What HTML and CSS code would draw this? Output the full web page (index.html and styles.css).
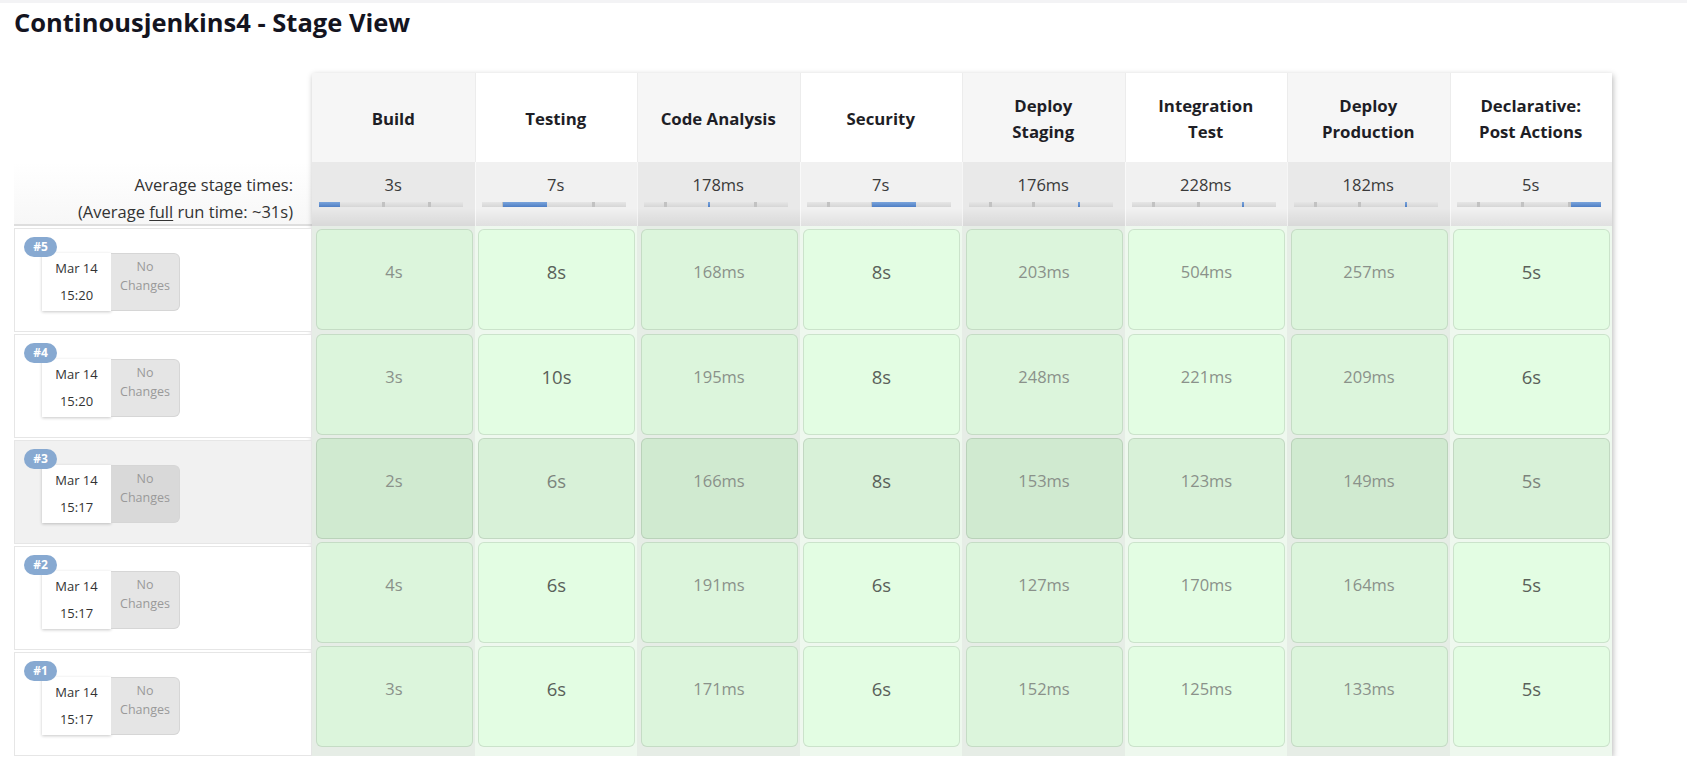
FILE: index.html
```html
<!DOCTYPE html>
<html>
<head>
<meta charset="utf-8">
<title>Continousjenkins4 - Stage View</title>
<link rel="stylesheet" href="styles.css">
</head>
<body>
<div class="topbar"></div>
<h1 class="title">Continousjenkins4 - Stage View</h1>
<div class="stage-view">
  <div class="builds">
    <div class="builds-head"></div>
    <div class="avg-label">
      <div>Average stage times:</div>
      <div>(Average <u>full</u> run time: ~31s)</div>
    </div>
    <div class="build-row"><div class="build-box"><span class="badge">#5</span><div class="build-info"><div class="date">Mar 14<br>15:20</div><div class="changes">No<br>Changes</div></div></div></div>
    <div class="build-row"><div class="build-box"><span class="badge">#4</span><div class="build-info"><div class="date">Mar 14<br>15:20</div><div class="changes">No<br>Changes</div></div></div></div>
    <div class="build-row hover"><div class="build-box"><span class="badge">#3</span><div class="build-info"><div class="date">Mar 14<br>15:17</div><div class="changes">No<br>Changes</div></div></div></div>
    <div class="build-row"><div class="build-box"><span class="badge">#2</span><div class="build-info"><div class="date">Mar 14<br>15:17</div><div class="changes">No<br>Changes</div></div></div></div>
    <div class="build-row"><div class="build-box"><span class="badge">#1</span><div class="build-info"><div class="date">Mar 14<br>15:17</div><div class="changes">No<br>Changes</div></div></div></div>
  </div>

  <div class="stages">
    <div class="col odd">
      <div class="stage-head">Build</div>
      <div class="stage-avg"><div class="avg-time">3s</div><div class="bar"><i class="tick" style="left:63px"></i><i class="tick" style="left:109px"></i><i class="fill" style="left:0;width:21px"></i></div></div>
      <div class="col-body">
        <div class="cell">4s</div>
        <div class="cell">3s</div>
        <div class="cell hover">2s</div>
        <div class="cell">4s</div>
        <div class="cell">3s</div>
      </div>
    </div>
    <div class="col even">
      <div class="stage-head">Testing</div>
      <div class="stage-avg"><div class="avg-time">7s</div><div class="bar"><i class="tick" style="left:20px"></i><i class="tick" style="left:110px"></i><i class="fill" style="left:21px;width:44px"></i></div></div>
      <div class="col-body">
        <div class="cell long">8s</div>
        <div class="cell long">10s</div>
        <div class="cell hover long dim">6s</div>
        <div class="cell long">6s</div>
        <div class="cell long">6s</div>
      </div>
    </div>
    <div class="col odd">
      <div class="stage-head">Code Analysis</div>
      <div class="stage-avg"><div class="avg-time">178ms</div><div class="bar"><i class="tick" style="left:20px"></i><i class="tick" style="left:110px"></i><i class="fill" style="left:64px;width:2px"></i></div></div>
      <div class="col-body">
        <div class="cell">168ms</div>
        <div class="cell">195ms</div>
        <div class="cell hover">166ms</div>
        <div class="cell">191ms</div>
        <div class="cell">171ms</div>
      </div>
    </div>
    <div class="col even">
      <div class="stage-head">Security</div>
      <div class="stage-avg"><div class="avg-time">7s</div><div class="bar"><i class="tick" style="left:20px"></i><i class="tick" style="left:64px"></i><i class="fill" style="left:65px;width:44px"></i></div></div>
      <div class="col-body">
        <div class="cell long">8s</div>
        <div class="cell long">8s</div>
        <div class="cell hover long">8s</div>
        <div class="cell long">6s</div>
        <div class="cell long">6s</div>
      </div>
    </div>
    <div class="col odd">
      <div class="stage-head">Deploy<br>Staging</div>
      <div class="stage-avg"><div class="avg-time">176ms</div><div class="bar"><i class="tick" style="left:20px"></i><i class="tick" style="left:63px"></i><i class="fill" style="left:109px;width:2px"></i></div></div>
      <div class="col-body">
        <div class="cell">203ms</div>
        <div class="cell">248ms</div>
        <div class="cell hover">153ms</div>
        <div class="cell">127ms</div>
        <div class="cell">152ms</div>
      </div>
    </div>
    <div class="col even">
      <div class="stage-head">Integration<br>Test</div>
      <div class="stage-avg"><div class="avg-time">228ms</div><div class="bar"><i class="tick" style="left:20px"></i><i class="tick" style="left:65px"></i><i class="fill" style="left:110px;width:2px"></i></div></div>
      <div class="col-body">
        <div class="cell">504ms</div>
        <div class="cell">221ms</div>
        <div class="cell hover">123ms</div>
        <div class="cell">170ms</div>
        <div class="cell">125ms</div>
      </div>
    </div>
    <div class="col odd">
      <div class="stage-head">Deploy<br>Production</div>
      <div class="stage-avg"><div class="avg-time">182ms</div><div class="bar"><i class="tick" style="left:20px"></i><i class="tick" style="left:64px"></i><i class="fill" style="left:111px;width:2px"></i></div></div>
      <div class="col-body">
        <div class="cell">257ms</div>
        <div class="cell">209ms</div>
        <div class="cell hover">149ms</div>
        <div class="cell">164ms</div>
        <div class="cell">133ms</div>
      </div>
    </div>
    <div class="col even">
      <div class="stage-head">Declarative:<br>Post Actions</div>
      <div class="stage-avg"><div class="avg-time">5s</div><div class="bar"><i class="tick" style="left:20px"></i><i class="tick" style="left:64px"></i><i class="tick" style="left:111px"></i><i class="fill" style="left:114px;width:30px"></i></div></div>
      <div class="col-body">
        <div class="cell long">5s</div>
        <div class="cell long">6s</div>
        <div class="cell hover long dim">5s</div>
        <div class="cell long">5s</div>
        <div class="cell long">5s</div>
      </div>
    </div>
  </div>
</div>
</body>
</html>
```

FILE: styles.css
```css
* { box-sizing: border-box; }

body {
  margin: 0;
  font-family: "Open Sans", "Noto Sans", sans-serif;
  color: #333;
  background: #fff;
}

.topbar {
  height: 3px;
  background: #f3f3f5;
}

.title {
  margin: 3px 0 0 14px;
  font-size: 25.5px;
  line-height: 32px;
  font-weight: 700;
  color: #14141f;
}

.stage-view {
  display: flex;
  padding-left: 14px;
  margin-top: 35px;
}

/* ---------- left builds column ---------- */
.builds {
  width: 298px;
  flex: none;
  display: flex;
  flex-direction: column;
}

.builds-head { height: 89px; }

.avg-label {
  height: 64px;
  padding: 10px 19px 0 0;
  text-align: right;
  font-size: 16.5px;
  line-height: 26.7px;
  color: #333;
  border-bottom: 2px solid #dedede;
  background: linear-gradient(#ffffff, #f7f7f7);
}

.avg-label u { text-underline-offset: 2px; }

.build-row {
  height: 106px;
  padding: 1.5px 0 0.5px;
}

.build-box {
  position: relative;
  height: 104px;
  border: 1px solid #e6e6e6;
  padding: 24px 0 0 27px;
  background: #fff;
}

.build-row.hover .build-box { background: #f1f1f1; }

.badge {
  position: absolute;
  left: 9px;
  top: 8px;
  width: 33px;
  height: 20px;
  border-radius: 10px;
  background: #87a9d1;
  color: #fff;
  font-size: 12px;
  font-weight: 700;
  line-height: 20px;
  text-align: center;
  z-index: 1;
}

.build-info { display: flex; }

.date {
  width: 69px;
  height: 58px;
  padding-top: 2px;
  background: #fff;
  box-shadow: 0 1px 3px rgba(0, 0, 0, 0.22);
  font-size: 13px;
  line-height: 27.7px;
  text-align: center;
  color: #333;
}

.changes {
  width: 69px;
  height: 58px;
  padding-top: 3px;
  background: #e5e5e5;
  border: 1px solid #d6d6d6;
  border-left: none;
  border-radius: 0 6px 6px 0;
  color: #999;
  font-size: 12.5px;
  line-height: 19px;
  text-align: center;
}

.build-row.hover .changes { background: #d9d9d9; }

/* ---------- stage table ---------- */
.stages {
  width: 1300px;
  flex: none;
  display: grid;
  grid-template-columns: repeat(8, 1fr);
  box-shadow: 1px 2px 6px rgba(0, 0, 0, 0.28);
}

.col {
  display: flex;
  flex-direction: column;
}

.stage-head {
  height: 89px;
  padding: 3px 8px 0;
  display: flex;
  align-items: center;
  justify-content: center;
  text-align: center;
  font-size: 16.8px;
  font-weight: 700;
  line-height: 25.7px;
  color: #1e1e26;
}

.odd .stage-head { background: #f6f6f6; }
.even .stage-head { background: #ffffff; }
.col + .col .stage-head { box-shadow: inset 1px 0 0 #ececec; }

.stage-avg {
  height: 64px;
  padding-top: 12px;
  text-align: center;
  background-image: linear-gradient(to bottom, rgba(0,0,0,0) 72%, rgba(0,0,0,0.07) 100%);
}

.odd .stage-avg { background-color: #e9e9e9; }
.even .stage-avg { background-color: #f1f1f1; }
.col + .col .stage-avg { box-shadow: inset 1px 0 0 rgba(255,255,255,0.6); }

.avg-time {
  font-size: 16.5px;
  line-height: 22px;
  color: #3a3a3a;
}

.bar {
  position: relative;
  width: 144px;
  height: 5px;
  margin: 6px 0 0 7px;
  background: linear-gradient(#e6e6e6, #d6d6d6);
}

.tick {
  position: absolute;
  top: 0;
  width: 3px;
  height: 5px;
  background: #c2c2c2;
}

.fill {
  position: absolute;
  top: 0;
  height: 5px;
  background: linear-gradient(#7aa4dc, #4f7fc4);
}

.col-body {
  flex: 1;
  padding-bottom: 2px;
}

.odd .col-body { background: #e6ede6; }
.even .col-body { background: #eef8ee; }

.cell {
  height: 101px;
  margin: 3.3px 2px 1.7px 3.5px;
  padding-top: 31px;
  border: 1px solid rgba(0, 0, 0, 0.1);
  border-radius: 6px;
  text-align: center;
  font-size: 16.5px;
  line-height: 22px;
  color: #8a918a;
}

.odd .cell { background: #dcf5dc; }
.even .cell { background: #e3fde3; }
.odd .cell.hover { background: #d0ead0; }
.even .cell.hover { background: #d8f1d8; }

.cell.long {
  font-size: 18.5px;
  color: #5a615a;
}

.cell.long.dim { color: #7c847c; }
```
